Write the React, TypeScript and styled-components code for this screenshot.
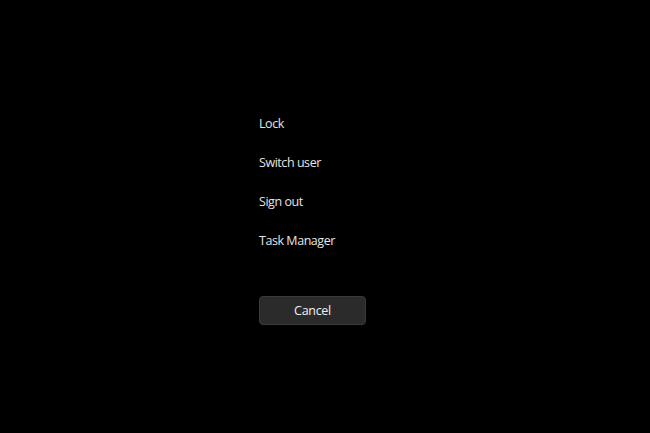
import styled, { createGlobalStyle } from "styled-components";

const Global = createGlobalStyle`
  html, body {
    margin: 0;
    padding: 0;
    background: #000;
  }
`;

const Screen = styled.div`
  width: 650px;
  height: 433px;
  background: #000;
  font-family: "Open Sans", "Noto Sans", sans-serif;
  color: #e4e4e4;
  padding: 104px 0 0 259px;
  box-sizing: border-box;
  display: flex;
  flex-direction: column;
  align-items: flex-start;
`;

const Options = styled.div`
  display: flex;
  flex-direction: column;
`;

const Option = styled.div`
  height: 39px;
  line-height: 39px;
  font-size: 12.5px;
  letter-spacing: -0.45px;
  cursor: pointer;
`;

const CancelButton = styled.button`
  margin-top: 36px;
  width: 107px;
  height: 29px;
  border-radius: 4px;
  border: 1px solid #3a3a3a;
  background: #2b2b2b;
  color: #f0f0f0;
  font-family: inherit;
  font-size: 12.5px;
  letter-spacing: -0.3px;
  padding: 0;
`;

const options = ["Lock", "Switch user", "Sign out", "Task Manager"];

export default function App() {
  return (
    <>
      <Global />
      <Screen>
        <Options>
          {options.map((o) => (
            <Option key={o}>{o}</Option>
          ))}
        </Options>
        <CancelButton>Cancel</CancelButton>
      </Screen>
    </>
  );
}
